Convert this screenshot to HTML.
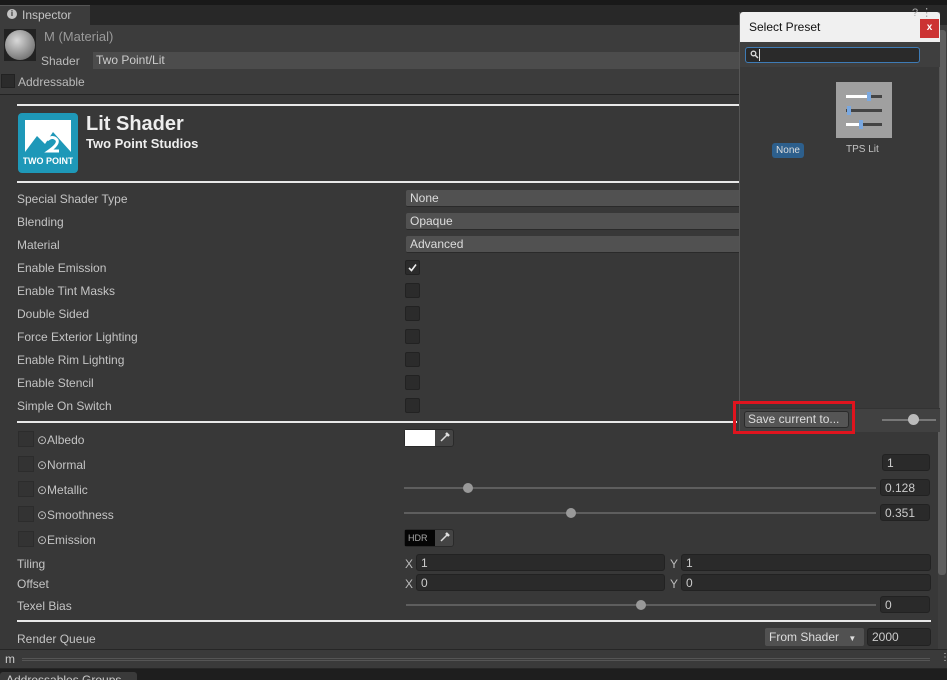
<!DOCTYPE html>
<html><head><meta charset="utf-8"><style>
*{box-sizing:border-box;margin:0;padding:0}
body{width:947px;height:680px;overflow:hidden;background:#383838;font-family:"Liberation Sans",sans-serif;font-size:12px;color:#c4c4c4;position:relative}
.a{position:absolute}
.lbl{position:absolute;left:17px;font-size:12px;color:#c4c4c4}
.dd{position:absolute;left:406px;width:340px;height:17px;background:#515151;border-radius:2px;color:#ddd;padding-left:4px;line-height:17px;border-bottom:1px solid #2a2a2a}
.cb{position:absolute;left:405px;width:15px;height:15px;background:#2b2b2b;border:1px solid #222;border-radius:2px}
.hl{position:absolute;left:17px;width:914px;height:2px;background:#e8e8e8}
.tb{position:absolute;left:18px;width:16px;height:16px;background:#333;border:1px solid #2c2c2c}
.tl{position:absolute;left:37px;color:#c4c4c4}
.sl{position:absolute;height:2px;background:#5e5e5e}
.kn{position:absolute;width:10px;height:10px;border-radius:50%;background:#999}
.nf{position:absolute;background:#2a2a2a;border:1px solid #222;border-radius:3px;color:#ccc;padding-left:4px;height:17px;line-height:16px}
</style></head><body>
<div class="a" style="left:0;top:0;width:947px;height:5px;background:#191919"></div>
<div class="a" style="left:0;top:5px;width:947px;height:20px;background:#282828"></div>
<div class="a" style="left:0;top:5px;width:90px;height:20px;background:#3c3c3c;border-top:1px solid #555"></div>
<div class="a" style="left:7px;top:9px;width:10px;height:10px;border-radius:50%;background:#c4c4c4;color:#333;font-size:8px;font-weight:bold;text-align:center;line-height:10px">i</div>
<div class="a" style="left:22px;top:8px;color:#c4c4c4">Inspector</div>
<div class="a" style="left:0;top:25px;width:947px;height:70px;background:#3c3c3c;border-bottom:1px solid #232323"></div>
<div class="a" style="left:4px;top:29px;width:32px;height:32px;background:#222"></div>
<div class="a" style="left:5px;top:30px;width:30px;height:30px;border-radius:50%;background:radial-gradient(circle at 40% 35%,#d8d8d8,#8a8a8a 60%,#555)"></div>
<div class="a" style="left:44px;top:29px;font-size:13px;color:#9a9a9a">M (Material)</div>
<div class="a" style="left:41px;top:54px;color:#bbb">Shader</div>
<div class="a" style="left:93px;top:52px;width:660px;height:17px;background:#4c4c4c;color:#ccc;padding-left:3px;line-height:17px">Two Point/Lit</div>
<div class="a" style="left:1px;top:74px;width:14px;height:14px;background:#2b2b2b;border:1px solid #222"></div>
<div class="a" style="left:18px;top:75px;color:#bbb">Addressable</div>
<div class="hl" style="top:104px"></div>
<div class="a" style="left:18px;top:113px;width:60px;height:60px;background:#1e98b8;border-radius:4px"></div>
<svg class="a" style="left:23px;top:118px" width="50" height="50" viewBox="0 0 50 50"><rect x="2" y="2" width="46" height="32" fill="#fff"/><path d="M2 34 L14 18 L22 26 L30 14 L48 34Z" fill="#1e98b8"/><path d="M24 22 q6-5 10 0 q2 4-8 11 h10" stroke="#fff" stroke-width="3" fill="none"/><text x="25" y="46" font-family="Liberation Sans" font-weight="bold" font-size="9" fill="#fff" text-anchor="middle">TWO POINT</text></svg>
<div class="a" style="left:86px;top:113px;font-size:20px;font-weight:bold;color:#eee">Lit Shader</div>
<div class="a" style="left:86px;top:136px;font-size:13px;font-weight:bold;color:#eee">Two Point Studios</div>
<div class="hl" style="top:181px"></div>
<div class="lbl" style="top:192px">Special Shader Type</div><div class="dd" style="top:190px">None</div>
<div class="lbl" style="top:215px">Blending</div><div class="dd" style="top:213px">Opaque</div>
<div class="lbl" style="top:238px">Material</div><div class="dd" style="top:236px">Advanced</div>
<div class="lbl" style="top:261px">Enable Emission</div><div class="cb" style="top:260px"><svg width="13" height="13" style="position:absolute;left:0;top:0"><path d="M3 7 L5.5 9.5 L10 3.5" stroke="#eee" stroke-width="1.6" fill="none"/></svg></div>
<div class="lbl" style="top:284px">Enable Tint Masks</div><div class="cb" style="top:283px"></div>
<div class="lbl" style="top:307px">Double Sided</div><div class="cb" style="top:306px"></div>
<div class="lbl" style="top:330px">Force Exterior Lighting</div><div class="cb" style="top:329px"></div>
<div class="lbl" style="top:353px">Enable Rim Lighting</div><div class="cb" style="top:352px"></div>
<div class="lbl" style="top:376px">Enable Stencil</div><div class="cb" style="top:375px"></div>
<div class="lbl" style="top:399px">Simple On Switch</div><div class="cb" style="top:398px"></div>
<div class="a" style="left:17px;top:421px;width:720px;height:2px;background:#e8e8e8"></div>
<div class="tb" style="top:431px"></div><div class="tl" style="top:433px">⊙Albedo</div>
<div class="tb" style="top:456px"></div><div class="tl" style="top:458px">⊙Normal</div>
<div class="tb" style="top:481px"></div><div class="tl" style="top:483px">⊙Metallic</div>
<div class="tb" style="top:506px"></div><div class="tl" style="top:508px">⊙Smoothness</div>
<div class="tb" style="top:531px"></div><div class="tl" style="top:533px">⊙Emission</div>
<div class="a" style="left:404px;top:429px;width:50px;height:18px;background:#444;border:1px solid #2a2a2a;border-radius:3px"></div>
<div class="a" style="left:405px;top:430px;width:30px;height:16px;background:#fff"></div>
<svg class="a" style="left:439px;top:431px" width="12" height="12"><path d="M2 10 L8 4" stroke="#ddd" stroke-width="1.5"/><path d="M7 2 L10 5" stroke="#ddd" stroke-width="2.5"/></svg>
<div class="a" style="left:404px;top:529px;width:50px;height:18px;background:#444;border:1px solid #2a2a2a;border-radius:3px"></div>
<div class="a" style="left:405px;top:530px;width:30px;height:16px;background:#050505;color:#aaa;font-size:9px;line-height:16px;padding-left:3px">HDR</div>
<svg class="a" style="left:439px;top:531px" width="12" height="12"><path d="M2 10 L8 4" stroke="#ddd" stroke-width="1.5"/><path d="M7 2 L10 5" stroke="#ddd" stroke-width="2.5"/></svg>
<div class="nf" style="left:882px;top:454px;width:48px">1</div>
<div class="sl" style="left:404px;top:487px;width:472px"></div><div class="kn" style="left:463px;top:483px"></div>
<div class="nf" style="left:880px;top:479px;width:50px">0.128</div>
<div class="sl" style="left:404px;top:512px;width:472px"></div><div class="kn" style="left:566px;top:508px"></div>
<div class="nf" style="left:880px;top:504px;width:50px">0.351</div>
<div class="lbl" style="top:557px">Tiling</div>
<div class="a" style="left:405px;top:557px;color:#bbb">X</div><div class="nf" style="left:416px;top:554px;width:249px">1</div>
<div class="a" style="left:670px;top:557px;color:#bbb">Y</div><div class="nf" style="left:681px;top:554px;width:250px">1</div>
<div class="lbl" style="top:577px">Offset</div>
<div class="a" style="left:405px;top:577px;color:#bbb">X</div><div class="nf" style="left:416px;top:574px;width:249px">0</div>
<div class="a" style="left:670px;top:577px;color:#bbb">Y</div><div class="nf" style="left:681px;top:574px;width:250px">0</div>
<div class="lbl" style="top:599px">Texel Bias</div>
<div class="sl" style="left:406px;top:604px;width:470px"></div><div class="kn" style="left:636px;top:600px"></div>
<div class="nf" style="left:880px;top:596px;width:50px">0</div>
<div class="hl" style="top:620px"></div>
<div class="lbl" style="top:632px">Render Queue</div>
<div class="a" style="left:765px;top:628px;width:99px;height:18px;background:#515151;border-radius:2px;color:#ddd;padding-left:4px;line-height:18px">From Shader <span style="font-size:8px;margin-left:6px">▼</span></div>
<div class="nf" style="left:867px;top:628px;width:64px;height:18px">2000</div>
<div class="a" style="left:938px;top:25px;width:9px;height:625px;background:#3e3e3e"></div>
<div class="a" style="left:938px;top:30px;width:8px;height:545px;background:#5f5f5f;border-radius:3px"></div>
<div class="a" style="left:0;top:649px;width:947px;height:20px;background:#3a3a3a;border-top:1px solid #262626;border-bottom:1px solid #262626"></div>
<div class="a" style="left:5px;top:652px;color:#ccc;font-size:12px">m</div>
<div class="a" style="left:22px;top:658px;width:908px;height:3px;border-top:1px solid #555;border-bottom:1px solid #555"></div>
<div class="a" style="left:940px;top:652px;color:#ccc;font-size:10px">⋮</div>
<div class="a" style="left:0;top:669px;width:947px;height:11px;background:#1e1e1e"></div>
<div class="a" style="left:0;top:672px;width:137px;height:8px;background:#3a3a3a;border-radius:3px 3px 0 0;overflow:hidden"><div style="position:absolute;left:6px;top:1px;color:#ccc;font-size:12px">Addressables Groups</div></div>
<!-- popup -->
<div class="a" style="left:739px;top:12px;width:201px;height:420px;background:#393939;border:1px solid #555;border-top:none"></div>
<div class="a" style="left:740px;top:12px;width:200px;height:30px;background:#f0f0f0;border-radius:3px 3px 0 0"></div>
<div class="a" style="left:749px;top:20px;color:#111;font-size:12px">Select Preset</div>
<div class="a" style="left:920px;top:19px;width:19px;height:19px;background:#cc3333;color:#fff;font-size:10px;font-weight:bold;text-align:center;line-height:18px">x</div>
<div class="a" style="left:740px;top:42px;width:200px;height:25px;background:#3f3f3f"></div>
<div class="a" style="left:745px;top:47px;width:175px;height:16px;background:#2a2a2a;border:1px solid #3e7bb5;border-radius:3px"></div>
<svg class="a" style="left:750px;top:50px" width="9" height="9"><circle cx="3.5" cy="3.5" r="2.3" stroke="#ddd" stroke-width="1.3" fill="none"/><path d="M5 5 L8 8" stroke="#ddd" stroke-width="1.5"/></svg>
<div class="a" style="left:759px;top:49px;width:1px;height:12px;background:#ddd"></div>
<div class="a" style="left:836px;top:82px;width:56px;height:56px;background:#a0a0a0"></div>
<div class="a" style="left:846px;top:95px;width:36px;height:3px;background:#444"></div><div class="a" style="left:846px;top:95px;width:23px;height:3px;background:#fff"></div><div class="a" style="left:867px;top:92px;width:4px;height:9px;background:#7aa8e0"></div>
<div class="a" style="left:846px;top:109px;width:36px;height:3px;background:#444"></div><div class="a" style="left:847px;top:106px;width:4px;height:9px;background:#7aa8e0"></div>
<div class="a" style="left:846px;top:123px;width:36px;height:3px;background:#444"></div><div class="a" style="left:846px;top:123px;width:15px;height:3px;background:#fff"></div><div class="a" style="left:859px;top:120px;width:4px;height:9px;background:#7aa8e0"></div>
<div class="a" style="left:772px;top:143px;width:32px;height:15px;background:#2d5f8c;border-radius:3px;color:#ddd;font-size:10px;text-align:center;line-height:15px">None</div>
<div class="a" style="left:846px;top:144px;color:#c4c4c4;font-size:10px">TPS Lit</div>
<div class="a" style="left:740px;top:408px;width:200px;height:24px;background:#414141;border-top:1px solid #333"></div>
<div class="sl" style="left:882px;top:419px;width:54px;background:#777"></div><div class="kn" style="left:908px;top:414px;width:11px;height:11px;background:#bbb"></div>
<div class="a" style="left:744px;top:411px;width:105px;height:17px;background:#555;border-radius:3px;border:1px solid #2a2a2a;color:#ddd;font-size:12px;line-height:15px;padding-left:3px">Save current to...</div>
<div class="a" style="left:733px;top:401px;width:122px;height:33px;border:3px solid #e0141e"></div>
<div class="a" style="left:912px;top:6px;color:#aaa;font-size:11px">?&nbsp;⋮</div>
</body></html>
